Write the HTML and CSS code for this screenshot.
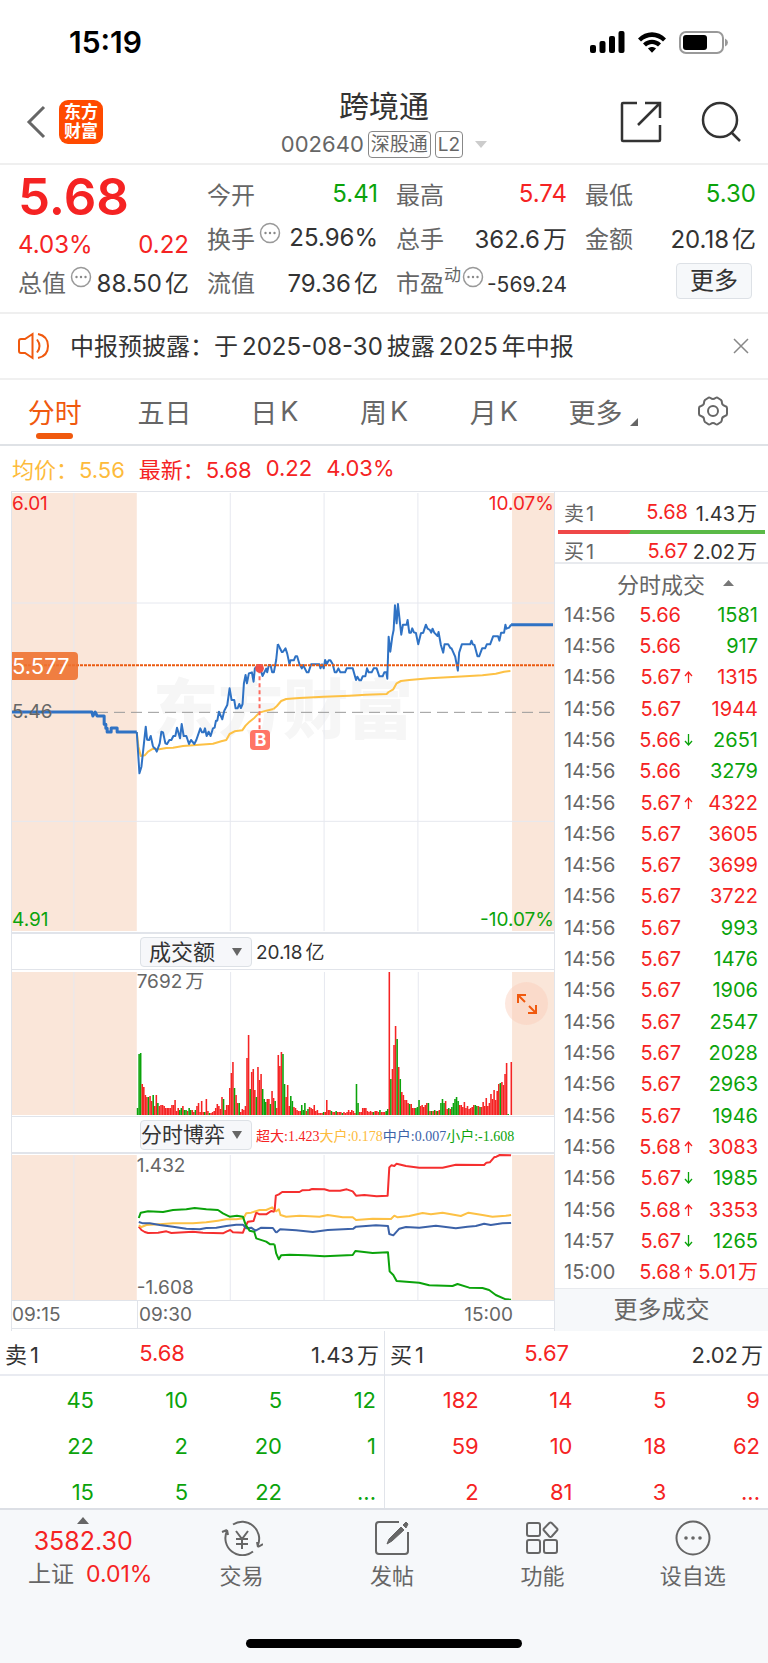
FILE: index.html
```html
<!DOCTYPE html>
<html lang="zh-CN">
<head>
    <meta charset="UTF-8">
    <meta name="viewport" content="width=device-width, initial-scale=1.0">
    <title>跨境通 002640</title>
    <link rel="stylesheet" href="styles.css">
</head>
<body>
    <svg width="0" height="0" class="defs">
        <symbol id="dots" viewBox="0 0 22 22">
            <circle cx="11" cy="11" r="9.5" fill="none" stroke="#999" stroke-width="1.5"/>
            <circle cx="6.5" cy="11" r="1.2" fill="#888"/><circle cx="11" cy="11" r="1.2" fill="#888"/><circle cx="15.5" cy="11" r="1.2" fill="#888"/>
        </symbol>
    </svg>

    <!-- Status bar -->
    <div class="status-bar">
        <span class="clock">15:19</span>
        <div class="status-icons">
            <svg width="35" height="22" viewBox="0 0 35 22"><rect x="0" y="14" width="6" height="8" rx="2"/><rect x="9.500" y="10" width="6" height="12" rx="2"/><rect x="19" y="5" width="6" height="17" rx="2"/><rect x="28.500" y="0" width="6" height="22" rx="2"/></svg>
            <svg width="30" height="22" viewBox="0 0 30 22"><path d="M1 7.500C9-.8 21-.8 29 7.500L26 10.500C20 4.500 10 4.500 4 10.500ZM6 12.500C11 7.500 19 7.500 24 12.500L21 15.500C17.500 12 12.500 12 9 15.500ZM11 17.500C13.300 15.500 16.700 15.500 19 17.500L15 21.800Z"/></svg>
            <svg width="49" height="23" viewBox="0 0 49 23"><rect x="1" y="1" width="43" height="21" rx="6" fill="none" stroke="#999" stroke-width="2"/><rect x="4" y="4" width="24" height="15" rx="3"/><path d="M46 7.500Q49 9 49 11.500T46 15.500Z" fill="#999"/></svg>
        </div>
    </div>

    <!-- Header -->
    <header class="header">
        <div class="header-left">
            <button class="icon-btn" aria-label="返回"><svg width="20" height="34" viewBox="0 0 20 34"><path d="M18 2L3 17L18 32" fill="none" stroke="#666" stroke-width="3"/></svg></button>
            <a class="logo" href="#"><span>东方</span><span>财富</span></a>
        </div>
        <div class="header-title">
            <h1>跨境通</h1>
            <div class="code">
                <span>002640</span>
                <span class="tag">深股通</span><span class="tag">L2</span>
                <svg width="12" height="7" viewBox="0 0 12 7"><path d="M0 0H12L6 7Z" fill="#ccc"/></svg>
            </div>
        </div>
        <div class="header-right">
            <button class="icon-btn" aria-label="分享"><svg width="42" height="42" viewBox="0 0 42 42" fill="none" stroke="#333" stroke-width="2.500"><path d="M17 2H3Q2 2 2 3V39Q2 40 3 40H39Q40 40 40 39V24M25 2H40V17M40 2L18 24"/></svg></button>
            <button class="icon-btn" aria-label="搜索"><svg width="42" height="42" viewBox="0 0 42 42" fill="none" stroke="#333" stroke-width="2.500"><circle cx="20" cy="19" r="17"/><path d="M31 31L40 40"/></svg></button>
        </div>
    </header>

    <!-- Quote -->
    <section class="quote">
        <div class="price">5.68</div>
        <div class="item"><span>今开</span><b class="green">5.41</b></div>
        <div class="item"><span>最高</span><b class="red">5.74</b></div>
        <div class="item"><span>最低</span><b class="green">5.30</b></div>

        <div class="item change"><b class="red">4.03%</b><b class="red">0.22</b></div>
        <div class="item"><span>换手<svg class="info"><use href="#dots"/></svg></span><b>25.96%</b></div>
        <div class="item"><span>总手</span><b>362.6<i>万</i></b></div>
        <div class="item"><span>金额</span><b>20.18<i>亿</i></b></div>

        <div class="item"><span>总值<svg class="info"><use href="#dots"/></svg></span><b>88.50<i>亿</i></b></div>
        <div class="item"><span>流值</span><b>79.36<i>亿</i></b></div>
        <div class="item"><span>市盈<sup>动</sup><svg class="info near"><use href="#dots"/></svg></span><b class="small">-569.24</b></div>
        <div class="item right"><button class="more-btn">更多</button></div>
    </section>

    <!-- Notice -->
    <section class="notice">
        <svg width="32" height="28" viewBox="0 0 32 28" fill="none" stroke="#f0590e" stroke-width="2"><path d="M14.500 2V26L7 21H3Q1 21 1 19V9Q1 7 3 7H7ZM19 7.500Q24 14 19 20.500M20 2Q30 4 30 14T20 26"/></svg>
        <p>中报预披露：于<i>2025-08-30</i>披露<i>2025</i>年中报</p>
        <button class="icon-btn" aria-label="关闭"><svg width="16" height="16" viewBox="0 0 16 16"><path d="M1 1L15 15M15 1L1 15" stroke="#888" stroke-width="1.500"/></svg></button>
    </section>

    <!-- Period tabs -->
    <nav class="tabs">
        <button class="active">分时</button>
        <button>五日</button>
        <button>日<i>K</i></button>
        <button>周<i>K</i></button>
        <button>月<i>K</i></button>
        <button class="with-corner">更多<svg width="8" height="8" viewBox="0 0 8 8"><path d="M8 0V8H0Z" fill="#666"/></svg></button>
        <button aria-label="设置"><svg width="32" height="30" viewBox="0 0 32 30" fill="none" stroke="#666" stroke-width="2"><path d="M11 2Q12 1 13.500 2Q16 4 18.500 2Q20 1 21 2L24 4Q25 5 25 7Q25 9 28 10Q30 10.500 30 12V18Q30 19.500 28 20Q25 21 25 23Q25 25 24 26L21 28Q20 29 18.500 28Q16 26 13.500 28Q12 29 11 28L8 26Q7 25 7 23Q7 21 4 20Q2 19.500 2 18V12Q2 10.500 4 10Q7 9 7 7Q7 5 8 4Z"/><circle cx="16" cy="15" r="5"/></svg></button>
    </nav>

    <div class="legend">
        <span class="orange">均价：<i>5.56</i></span>
        <span class="red">最新：<i>5.68</i></span>
        <span class="red">0.22</span>
        <span class="red">4.03%</span>
    </div>

    <main class="board">
        <div class="charts">
            <!-- Price -->
            <div class="plot plot-price">
                <span class="watermark">东方财富</span>
                <svg class="canvas price-svg" viewBox="0 0 1629 1320" preserveAspectRatio="none">
                    <rect class="shade" x="0" y="3" width="375" height="1314"/>
                    <rect class="shade" x="1503" y="3" width="126" height="1314"/>
                    <path class="grid" d="M186 3V1317M656 3V1317M938 3V1317M1220 3V1317M0 333H1629M0 988H1629"/>
                    <path class="base" d="M0 661H1629"/>
                    <g transform="translate(-36 -36)">
                        <path class="line avg" d="M411 756L416 800L423 828L435 826L445 815L460 806L478 808L500 804L520 803L550 798L600 794L640 791L665 784L680 780L690 762L705 754L728 751L738 737L750 725L765 713L780 698L800 692L822 687"/>
                        <path class="line now thick" d="M36 696H276L279 708L286 696L292 708H313V733H318V745H322V756H334V744H352V756H411"/>
                        <path class="line now" d="M411 756L419 880L425 860L438 740L442 779L448 780L453 768L459 796L462 803L466 805L471 815L480 790L485 755L490 757L497 790L502 792L509 780H515L521 768H527L532 743L541 775L546 732L552 768H560L568 792L574 780L584 792L590 780L602 745L607 757H612L616 745L621 768L627 755L633 768L640 745L645 743L649 722H653L658 695L668 718L674 692L683 675L690 625L696 660H704L708 685H714L719 672L724 684L729 672L733 610L738 585L742 610L748 580L757 577L762 605L766 565L775 556L782 565L789 588L800 566L803 577L808 555H813L818 577H823L830 540L835 492"/>
                    </g>
                    <g transform="translate(714 -36)">
                        <path class="line avg" d="M72 687L82 678L95 663L110 657L150 654L223 650L300 647L350 644L412 642L418 636L432 628L442 610L455 603L480 600L540 595L610 591L700 586L740 581L765 575L784 573"/>
                        <path class="line now" d="M85 492L97 516H100L108 505L113 520L120 553L123 541H133L138 529H143L150 553L157 565L161 555L172 577H177L185 553H210L213 565L218 553L223 565L227 540L232 552L238 541H243L250 553L256 577H261L267 565L273 577H287L292 565H310L320 600L324 590L330 601H335L340 589H348L353 565L358 577H367L373 565H382L390 589H400L405 577H411L414 596L418 470L423 515L429 470L433 450L437 376L442 430L446 372L450 410L456 464L461 434H472L475 420L480 458H485L489 445L494 457L500 459L507 493L515 460L522 458L530 434L535 446L542 450L546 458L550 446L555 458L565 468L568 456L575 495L582 518L586 493H597L604 505H607L618 530L626 572L630 518L638 493H663L667 482L671 493L676 495L685 529H690L699 505H708L713 493H723L732 469H747L751 482L756 458H765L769 434L772 446L780 443L786 434"/>
                        <path class="line now thick" d="M786 434H912"/>
                    </g>
                    <path class="last" d="M0 520H1629"/>
                    <path class="buy-line" d="M744 532V712"/>
                    <ellipse cx="744" cy="529" rx="13" ry="13" fill="#f0504a"/>
                </svg>
                <span class="buy-mark">B</span>
                <span class="lbl top left red">6.01</span>
                <span class="lbl top end red">10.07%</span>
                <span class="lbl mid left">5.46</span>
                <span class="price-tag">5.577</span>
                <span class="lbl bottom left green">4.91</span>
                <span class="lbl bottom end green">-10.07%</span>
            </div>

            <div class="toolbar">
                <label class="picker"><select class="indent" aria-label="指标一"><option>成交额</option></select><svg width="10" height="8" viewBox="0 0 10 8"><path d="M0 0H10L5 8Z" fill="#666"/></svg></label>
                <span>20.18<i>亿</i></span>
            </div>

            <!-- Turnover -->
            <div class="plot plot-volume">
                <svg class="canvas sub-svg" viewBox="0 0 543 146" preserveAspectRatio="none">
                    <rect class="shade" x="0" y="2" width="125" height="143"/>
                    <rect class="shade" x="501" y="2" width="42" height="143"/>
                    <path class="grid" d="M62 2V145M219 2V145M313 2V145M407 2V145"/>
                    <g id="bars"></g>
                </svg>
                <span class="lbl top open">7692<i>万</i></span>
                <button class="expand" aria-label="全屏"><svg width="24" height="24" viewBox="0 0 24 24" fill="none" stroke="#f0590e" stroke-width="2"><path d="M11 3H3V11M3 3L10 10M21 13V21H13M21 21L14 14"/></svg></button>
            </div>

            <div class="toolbar">
                <label class="picker"><select aria-label="指标二"><option>分时博弈</option></select><svg width="10" height="8" viewBox="0 0 10 8"><path d="M0 0H10L5 8Z" fill="#666"/></svg></label>
                <div class="flow-legend"><span class="red">超大:1.423</span><span class="orange">大户:0.178</span><span class="blue">中户:0.007</span><span class="green">小户:-1.608</span></div>
            </div>

            <!-- Money flow -->
            <div class="plot plot-flow">
                <svg class="canvas sub-svg" viewBox="0 0 1629 438" preserveAspectRatio="none">
                    <rect class="shade" x="0" y="3" width="375" height="435"/>
                    <rect class="shade" x="1503" y="3" width="126" height="435"/>
                    <path class="grid" d="M186 3V438M656 3V438M938 3V438M1220 3V438"/>
                    <g transform="translate(-36 -672)">
                        <path class="line super" d="M417 890L425 900L435 906L445 909L475 908L500 904L515 909L580 905L610 908L640 909L670 910L682 904L692 900L700 907L730 908L737 890L745 875L762 873L770 848L780 853H800L815 843L825 845"/>
                        <path class="line big" d="M417 886L425 891L440 885L490 882L520 880H580L620 877L655 872L680 868H710L732 865L740 850L755 848L780 840H800L818 832L828 845"/>
                        <path class="line middle" d="M417 876L430 880H450L480 885L520 890L560 896L600 898L620 894L650 893L680 888L710 884H730L740 895L755 893L768 902L785 893L820 894L830 908"/>
                        <path class="line little" d="M417 864L423 848L445 844L490 846L520 840L560 838L585 834L620 838L655 840L670 850L690 860L712 857L730 860L738 884L750 902L764 905L770 925L800 935L812 943H825"/>
                    </g>
                    <g transform="translate(714 -672)">
                        <path class="line super" d="M75 845L79 797L88 793L98 786H150L158 781L180 780L188 777L225 778L240 782H272L292 778L310 784L320 797L345 795L382 799L415 797L420 712L426 706L435 708L442 701L470 708L510 713H580L620 704L705 705L712 698L722 697L735 682L742 680L752 675L786 676"/>
                        <path class="line big" d="M78 845L88 838L93 855L110 860L150 857L210 860L235 855L280 862H310L320 870L370 866L425 867L435 857L445 862L480 858L520 849L545 853L580 848L635 858L658 848L700 855L730 860L770 857L786 855"/>
                        <path class="line middle" d="M80 908L92 898L140 901L190 906L235 900L312 896L320 890L380 886L416 888L420 912L432 916L450 896L470 891L510 893L560 887L620 895L655 890L680 888L705 881L725 885L760 880L786 879"/>
                        <path class="line little" d="M75 943L80 970L88 988L95 976L120 974L170 976L225 979L310 975L318 963L370 969L416 967L421 1024L432 1035L442 1053L510 1058L540 1066L610 1068L625 1062L660 1073L700 1074L720 1080L740 1095L770 1108L786 1109"/>
                    </g>
                </svg>
                <span class="lbl top open">1.432</span>
                <span class="lbl bottom open">-1.608</span>
            </div>

            <div class="axis"><span>09:15</span><span>09:30</span><span>15:00</span></div>
        </div>

        <!-- Ticks -->
        <aside class="ticks">
            <div class="level"><span>卖<i>1</i></span><b class="red">5.68</b><b>1.43<i>万</i></b></div>
            <div class="ratio"></div>
            <div class="level"><span>买<i>1</i></span><b class="red">5.67</b><b>2.02<i>万</i></b></div>
            <button class="ticks-head">分时成交<svg width="11" height="6" viewBox="0 0 11 6"><path d="M5.500 0L11 6H0Z" fill="#777"/></svg></button>
            <table class="ticks-table">
                <tbody id="ticks"></tbody>
            </table>
            <button class="ticks-more">更多成交</button>
        </aside>
    </main>

    <!-- Order queue -->
    <section class="queue">
        <div class="side">
            <div class="side-head"><span>卖<i>1</i></span><b class="red">5.68</b><span>1.43<i>万</i></span></div>
            <table class="green">
                <tr><td>45</td><td>10</td><td>5</td><td>12</td></tr>
                <tr><td>22</td><td>2</td><td>20</td><td>1</td></tr>
                <tr><td>15</td><td>5</td><td>22</td><td>...</td></tr>
            </table>
        </div>
        <div class="side">
            <div class="side-head"><span>买<i>1</i></span><b class="red">5.67</b><span>2.02<i>万</i></span></div>
            <table class="red">
                <tr><td>182</td><td>14</td><td>5</td><td>9</td></tr>
                <tr><td>59</td><td>10</td><td>18</td><td>62</td></tr>
                <tr><td>2</td><td>81</td><td>3</td><td>...</td></tr>
            </table>
        </div>
    </section>

    <!-- Bottom bar -->
    <footer class="footer">
        <nav class="bottom-nav">
            <a class="index" href="#">
                <svg width="12" height="7" viewBox="0 0 12 7"><path d="M6 0L12 7H0Z" fill="#666"/></svg>
                <span class="index-value red">3582.30</span>
                <span class="index-row">上证<span class="red">0.01%</span></span>
            </a>
            <a href="#">
                <svg width="42" height="36" viewBox="0 0 42 36" fill="none" stroke="#666" stroke-width="2"><path d="M12 4.500A17 17 0 0 1 37 25M37 27L42 24M37 27L36 22M32 31.500A17 17 0 0 1 6 11M6 10L1 12M6 10L7 15M15 11L21 19L27 11M15 19H27M15 24H27M21 19V29"/></svg>
                交易
            </a>
            <a href="#">
                <svg width="36" height="36" viewBox="0 0 36 36" fill="none" stroke="#666" stroke-width="2"><path d="M25 2H5Q2 2 2 5V31Q2 34 5 34H31Q34 34 34 31V12"/><path d="M13 24L15 19L27 7L30 10L18 21ZM29 5L32 2L34 4L32 8Z" fill="#666" stroke-width="1"/></svg>
                发帖
            </a>
            <a href="#">
                <svg width="34" height="36" viewBox="0 0 34 36" fill="none" stroke="#666" stroke-width="2"><rect x="2" y="3" width="13" height="13" rx="2"/><rect x="2" y="20" width="13" height="13" rx="2"/><rect x="19" y="20" width="13" height="13" rx="2"/><path d="M24.300 3Q25.500 2 26.700 3L32 8.500Q33 9.500 32 10.500L26.700 16.500Q25.500 17.500 24.300 16.500L19 10.500Q18 9.500 19 8.500Z"/></svg>
                功能
            </a>
            <a href="#">
                <svg width="36" height="36" viewBox="0 0 36 36"><circle cx="18" cy="18" r="16.500" fill="none" stroke="#666" stroke-width="2"/><g fill="#666"><circle cx="11" cy="18" r="1.800"/><circle cx="18" cy="18" r="1.800"/><circle cx="25" cy="18" r="1.800"/></g></svg>
                设自选
            </a>
        </nav>
        <div class="home-bar"></div>
    </footer>

    <script src="script.js"></script>
</body>
</html>
```
FILE: styles.css
```css
* {
    box-sizing: border-box;
}

body {
    margin: 0;
    background-color: #fff;
    color: #333;
    font-family: Inter, "Noto Sans CJK SC", sans-serif;
    font-size: 24px;
}

button {
    border: none;
    background: none;
    padding: 0;
    font-family: inherit;
    color: inherit;
    cursor: pointer;
}

a {
    color: inherit;
    text-decoration: none;
}

b {
    font-weight: 400;
}

i {
    font-style: normal;
    margin-left: 3px;
}

svg {
    display: block;
    flex: none;
}

.defs {
    position: absolute;
}

.red {
    color: #f52323;
}

.green {
    color: #0ba30b;
}

.orange {
    color: #fdbb3c;
}

.blue {
    color: #3c62a8;
}

/* status bar */
.status-bar {
    display: flex;
    justify-content: space-between;
    align-items: center;
    height: 84px;
    padding: 0 40px 0 69px;
}

.clock {
    font-size: 30px;
    font-weight: 600;
    color: #000;
}

.status-icons {
    display: flex;
    align-items: center;
    gap: 12px;
}

/* header */
.header {
    display: grid;
    grid-template-columns: 1fr auto 1fr;
    align-items: center;
    height: 81px;
    padding: 0 26px 3px;
    border-bottom: 2px solid #efefef;
}

.header-left,
.header-right {
    display: flex;
    align-items: center;
    gap: 13px;
}

.header-right {
    justify-content: flex-end;
    gap: 38px;
}

.logo {
    display: flex;
    flex-direction: column;
    justify-content: center;
    align-items: center;
    width: 44px;
    height: 44px;
    border-radius: 9px;
    background-color: #ff4a00;
    color: #fff;
    font-size: 17px;
    font-weight: 700;
    line-height: 19px;
}

.header-title {
    text-align: center;
}

.header-title h1 {
    margin: 0;
    font-size: 30px;
    font-weight: 400;
    line-height: 44px;
}

.code {
    display: flex;
    align-items: center;
    gap: 4px;
    color: #666;
    font-size: 22px;
    line-height: 32px;
}

.code svg {
    margin-left: 8px;
}

.tag {
    padding: 0 2px;
    border: 1px solid #888;
    border-radius: 4px;
    font-size: 19px;
    line-height: 25px;
}

/* quote */
.quote {
    display: grid;
    grid-template-columns: repeat(4, 1fr);
    grid-auto-rows: 44px;
    column-gap: 18px;
    height: 149px;
    padding: 6px 12px 0 18px;
    border-bottom: 2px solid #efefef;
}

.price {
    color: #f52323;
    font-size: 51px;
    font-weight: 600;
    line-height: 52px;
}

.item {
    display: flex;
    justify-content: space-between;
    align-items: center;
    white-space: nowrap;
}

.item > span {
    display: flex;
    align-items: center;
    color: #666;
}

.item sup {
    font-size: 17px;
    line-height: 17px;
    margin-bottom: 12px;
}

.item.change {
    padding-top: 15px;
}

.item.right {
    justify-content: flex-end;
}

.item .small {
    padding-top: 6px;
    font-size: 21px;
}

.info {
    width: 22px;
    height: 22px;
    margin: 0 0 8px 4px;
}

.info.near {
    margin-left: 1px;
}

.more-btn {
    width: 76px;
    height: 36px;
    margin-right: 4px;
    border: 1px solid #dde1e6;
    border-radius: 4px;
    background-color: #f6f8fa;
    font-size: 24px;
    line-height: 32px;
}

/* notice */
.notice {
    display: flex;
    align-items: center;
    gap: 20px;
    height: 66px;
    padding: 0 19px 0 18px;
    border-bottom: 2px solid #f0f0f0;
}

.notice p {
    flex: 1;
    margin: 0;
    padding-bottom: 3px;
}

.notice i {
    margin: 0 4px;
}

/* tabs */
.tabs {
    display: grid;
    grid-template-columns: repeat(7, 1fr);
    height: 66px;
    border-bottom: 2px solid #dfe2e6;
    color: #666;
}

.tabs button {
    display: flex;
    justify-content: center;
    align-items: center;
    position: relative;
    padding-bottom: 2px;
    font-size: 27px;
}

.tabs .active {
    color: #f0590e;
}

.tabs .active::after {
    content: "";
    position: absolute;
    bottom: 5px;
    width: 37px;
    height: 6px;
    border-radius: 3px;
    background-color: #f0590e;
}

.with-corner svg {
    align-self: flex-end;
    margin: 0 0 16px 8px;
}

.legend {
    display: flex;
    align-items: center;
    gap: 14px;
    height: 45px;
    padding: 0 0 2px 12px;
    font-size: 22px;
}

.legend i {
    margin-left: 1px;
}

/* board */
.board {
    display: grid;
    grid-template-columns: minmax(0, 544fr) minmax(0, 213fr);
    padding-left: 11px;
}

.charts {
    display: flex;
    flex-direction: column;
    border-left: 1px solid #e1e4ea;
    border-right: 1px solid #e1e4ea;
}

.plot {
    position: relative;
    border-top: 1px solid #e1e4ea;
    border-bottom: 1px solid #e1e4ea;
}

.plot-price {
    border-bottom-width: 2px;
}

.plot-flow {
    border-top-width: 2px;
}

.canvas {
    position: relative;
    width: 100%;
}

.price-svg {
    height: 440px;
}

.sub-svg {
    height: 146px;
}

.canvas path {
    fill: none;
    vector-effect: non-scaling-stroke;
}

.shade {
    fill: #fae6d9;
}

.grid {
    stroke: #e6e8ef;
    stroke-width: 1px;
}

.base {
    stroke: #999;
    stroke-width: 1px;
    stroke-dasharray: 11 6;
}

.line {
    stroke-width: 2px;
    stroke-linejoin: round;
}

.canvas .thick {
    stroke-width: 3px;
}

.now {
    stroke: #2f72c4;
}

.avg,
.big {
    stroke: #fdc145;
}

.super {
    stroke: #f52f2f;
}

.middle {
    stroke: #3c62a8;
}

.little {
    stroke: #0ba30b;
}

.last {
    stroke: #ea5a10;
    stroke-width: 2px;
    stroke-dasharray: 3 1;
}

.buy-line {
    stroke: #ff6b5e;
    stroke-width: 2px;
    stroke-dasharray: 4 3;
}

/* labels drawn over the plots */
.lbl {
    position: absolute;
    color: #666;
    font-size: 19px;
    line-height: 24px;
}

.lbl.red {
    color: #f52323;
}

.lbl.green {
    color: #0ba30b;
}

.lbl.top {
    top: 0;
}

.lbl.bottom {
    bottom: 0;
}

.lbl.mid {
    top: 50%;
    margin-top: -12px;
}

.lbl.left {
    left: 0;
}

.lbl.end {
    right: 0;
}

.lbl.open {
    left: 23%;
}

.watermark {
    position: absolute;
    top: 173px;
    left: 26%;
    color: #f6f6f6;
    font-size: 65px;
    font-weight: 900;
    line-height: 90px;
}

.price-tag {
    position: absolute;
    top: 160px;
    left: 0;
    width: 66px;
    height: 28px;
    border-radius: 0 4px 4px 0;
    background-color: rgba(238, 114, 48, 0.9);
    color: #fff;
    font-size: 22px;
    line-height: 28px;
}

.buy-mark {
    position: absolute;
    top: 238px;
    left: 44%;
    width: 20px;
    height: 20px;
    border-radius: 4px;
    background-color: #ff7566;
    color: #fff;
    font-size: 18px;
    font-weight: 700;
    line-height: 20px;
    text-align: center;
}

.expand {
    position: absolute;
    top: 12px;
    right: 6px;
    display: flex;
    justify-content: center;
    align-items: center;
    width: 43px;
    height: 43px;
    border-radius: 50%;
    background-color: rgba(250, 205, 185, 0.45);
}

.toolbar {
    display: flex;
    align-items: center;
    gap: 4px;
    height: 35px;
    padding-left: 128px;
    font-size: 19px;
}

.toolbar > span {
    padding-bottom: 2px;
}

.picker {
    position: relative;
}

.picker select {
    appearance: none;
    display: block;
    width: 112px;
    height: 30px;
    padding: 0;
    border: 1px solid #dde1e6;
    border-radius: 4px;
    background-color: #f6f7fa;
    color: #333;
    font-family: inherit;
    font-size: 21px;
    line-height: 28px;
}

.picker .indent {
    padding-left: 8px;
    font-size: 22px;
}

.picker svg {
    position: absolute;
    top: 11px;
    right: 10px;
    pointer-events: none;
}

.flow-legend {
    font-family: "Liberation Serif", "Noto Sans CJK SC", serif;
    font-size: 14px;
    white-space: nowrap;
}

.axis {
    display: grid;
    grid-template-columns: 125fr 376fr 41fr;
    height: 28px;
    border-bottom: 1px solid #e1e4ea;
    color: #666;
    font-size: 19px;
    line-height: 28px;
}

.axis span:nth-child(2) {
    border-left: 1px solid #e1e4ea;
    padding-left: 1px;
}

.axis span:nth-child(3) {
    justify-self: start;
    direction: rtl;
    width: 0;
}

/* ticks */
.ticks {
    display: flex;
    flex-direction: column;
    border-top: 1px solid #e1e4ea;
    font-size: 20px;
}

.ticks i {
    margin-left: 2px;
}

.level {
    display: grid;
    grid-template-columns: 1fr 88px 69px;
    align-items: center;
    height: 38px;
    padding: 2px 11px 0 9px;
    text-align: right;
    white-space: nowrap;
}

.level span {
    color: #666;
    text-align: left;
}

.ratio {
    height: 4px;
    margin: 0 3px;
    background: linear-gradient(120deg, #ef4848 35%, #5aba47 35%);
}

.ratio + .level {
    height: 30px;
    border-bottom: 2px solid #e8eaee;
}

.ticks-head {
    display: flex;
    justify-content: center;
    align-items: center;
    gap: 18px;
    height: 35px;
    padding: 2px 0 0 28px;
    color: #666;
    font-size: 22px;
}

.ticks-table {
    width: 100%;
    height: 689px;
    border-collapse: collapse;
    table-layout: fixed;
    line-height: 24px;
}

.ticks-table td {
    padding: 0;
}

.ticks-table td:nth-child(1) {
    width: 64px;
    padding-left: 9px;
    color: #666;
}

.ticks-table td:nth-child(2) {
    width: 62px;
    text-align: right;
}

.ticks-table td:nth-child(3) {
    width: 13px;
}

.ticks-table td:nth-child(3) svg {
    margin-left: 3px;
}

.ticks-table td:nth-child(4) {
    padding-right: 10px;
    text-align: right;
}

.ticks-more {
    flex: 1;
    min-height: 43px;
    border-top: 1px solid #e8eaee;
    background-color: #f6f8fa;
    color: #666;
    font-size: 24px;
    line-height: 32px;
}

/* order queue */
.queue {
    display: grid;
    grid-template-columns: 1fr 1fr;
    border-bottom: 2px solid #dcdfe5;
    font-size: 22px;
}

.side + .side {
    border-left: 1px solid #e1e4ea;
}

.side-head {
    display: grid;
    grid-template-columns: 30% 24% 1fr;
    align-items: center;
    height: 45px;
    padding: 0 5px;
    border-bottom: 2px solid #e9ebf1;
}

.side-head b {
    text-align: center;
}

.side-head span:last-child {
    text-align: right;
}

.side table {
    width: 100%;
    padding-right: 8px;
    border-spacing: 0;
    table-layout: fixed;
    line-height: 32px;
}

.side td {
    padding: 14px 0 0;
    text-align: right;
}

.side tr:first-child td {
    padding-top: 8px;
}

/* footer */
.footer {
    padding-bottom: 16px;
    background-color: #f6f8fa;
    color: #666;
}

.bottom-nav {
    display: grid;
    grid-template-columns: 166fr repeat(4, 150fr);
    height: 129px;
    font-size: 22px;
    line-height: 32px;
}

.bottom-nav a {
    display: flex;
    flex-direction: column;
    align-items: center;
    gap: 4px;
    padding-top: 10px;
}

.bottom-nav .index {
    gap: 0;
    padding-top: 7px;
}

.index-value {
    font-size: 25px;
    line-height: 34px;
}

.index-row {
    display: flex;
    gap: 12px;
    padding-left: 14px;
    font-size: 23px;
}

.home-bar {
    width: 36%;
    height: 9px;
    margin: 0 auto;
    border-radius: 5px;
    background-color: #000;
}
```
FILE: script.js
```js
// turnover per minute, negative = falling minute
const volumes = [
    -7, -61, -62, 31, 28, 20, 18, -18, 19, 14, -20, 9, 20, -12, 9, 10, 10, 9, 7, 7,
    7, 7, 10, 10, 15, 4, 7, -5, -7, 9, -5, -5, 4, -7, -5, 5, 3, -5, 9, 12,
    3, 14, 3, -3, 16, 4, -2, 2, 3, 4, 7, 11, 9, 6, 18, -16, 5, 10, 10, 27,
    42, 53, -27, 20, 12, -12, 3, 6, 5, 9, 57, 80, -26, 43, 46, 25, -18, 48, 35, 41,
    -26, -16, -13, 16, 16, -11, 24, 17, -14, 7, 60, 49, 63, -61, -31, 18, 30, 9, -19, -14,
    8, 7, 5, 4, 4, -10, -5, -12, 4, -6, 8, 7, 6, 10, 4, 5, 2, 2, 2, -3,
    3, 15, 5, 5, -4, 3, 3, -4, 3, 3, 3, -2, 3, 2, 3, 5, 3, 5, 4, 2,
    -31, -12, 3, 3, 7, 7, 7, 4, 3, 4, 3, -3, 4, 4, 3, -5, 3, 3, 3, -4,
    -6, 143, -36, 46, 70, 89, -76, 48, -36, 23, 20, 15, 15, 12, -11, 11, 7, 7, -7, -8,
    -15, 9, 10, 8, 10, 12, -12, 4, -4, 4, -5, 4, -4, 5, -12, -16, -12, 14, 6, -7,
    6, -8, -12, -16, -18, -14, 10, 10, 8, 13, 7, 9, 6, 7, 8, 10, -10, -9, 9, -8,
    8, 13, 9, 17, 9, 12, 21, 16, 25, 15, 24, 31, -32, 33, 30, 41, 52, -1, 0, 53
];

const step = 376 / volumes.length;
document.getElementById('bars').innerHTML = volumes.map((v, i) => {
    const h = Math.abs(v);
    return `<rect x="${125 + i * step}" y="${145 - h}" width="${step}" height="${h}" fill="${v < 0 ? '#0ba30b' : '#f52323'}"/>`;
}).join('');

// time, price, direction, volume, side
const ticks = [
    ['14:56', '5.66', '', '1581', 'green'],
    ['14:56', '5.66', '', '917', 'green'],
    ['14:56', '5.67', 'up', '1315', 'red'],
    ['14:56', '5.67', '', '1944', 'red'],
    ['14:56', '5.66', 'down', '2651', 'green'],
    ['14:56', '5.66', '', '3279', 'green'],
    ['14:56', '5.67', 'up', '4322', 'red'],
    ['14:56', '5.67', '', '3605', 'red'],
    ['14:56', '5.67', '', '3699', 'red'],
    ['14:56', '5.67', '', '3722', 'red'],
    ['14:56', '5.67', '', '993', 'green'],
    ['14:56', '5.67', '', '1476', 'green'],
    ['14:56', '5.67', '', '1906', 'green'],
    ['14:56', '5.67', '', '2547', 'green'],
    ['14:56', '5.67', '', '2028', 'green'],
    ['14:56', '5.67', '', '2963', 'green'],
    ['14:56', '5.67', '', '1946', 'green'],
    ['14:56', '5.68', 'up', '3083', 'red'],
    ['14:56', '5.67', 'down', '1985', 'green'],
    ['14:56', '5.68', 'up', '3353', 'red'],
    ['14:57', '5.67', 'down', '1265', 'green'],
    ['15:00', '5.68', 'up', '5.01<i>万</i>', 'red']
];

const arrows = {
    '': '',
    up: '<svg width="9" height="12" viewBox="0 0 9 12"><path d="M4.500 12V1M1 5L4.500 1L8 5" fill="none" stroke="#f52323" stroke-width="1.300"/></svg>',
    down: '<svg width="9" height="12" viewBox="0 0 9 12"><path d="M4.500 0V11M1 7L4.500 11L8 7" fill="none" stroke="#0ba30b" stroke-width="1.300"/></svg>'
};

document.getElementById('ticks').innerHTML = ticks.map(([time, price, dir, vol, side]) => `
    <tr>
        <td>${time}</td>
        <td class="red">${price}</td>
        <td>${arrows[dir]}</td>
        <td class="${side}">${vol}</td>
    </tr>
`).join('');
```
